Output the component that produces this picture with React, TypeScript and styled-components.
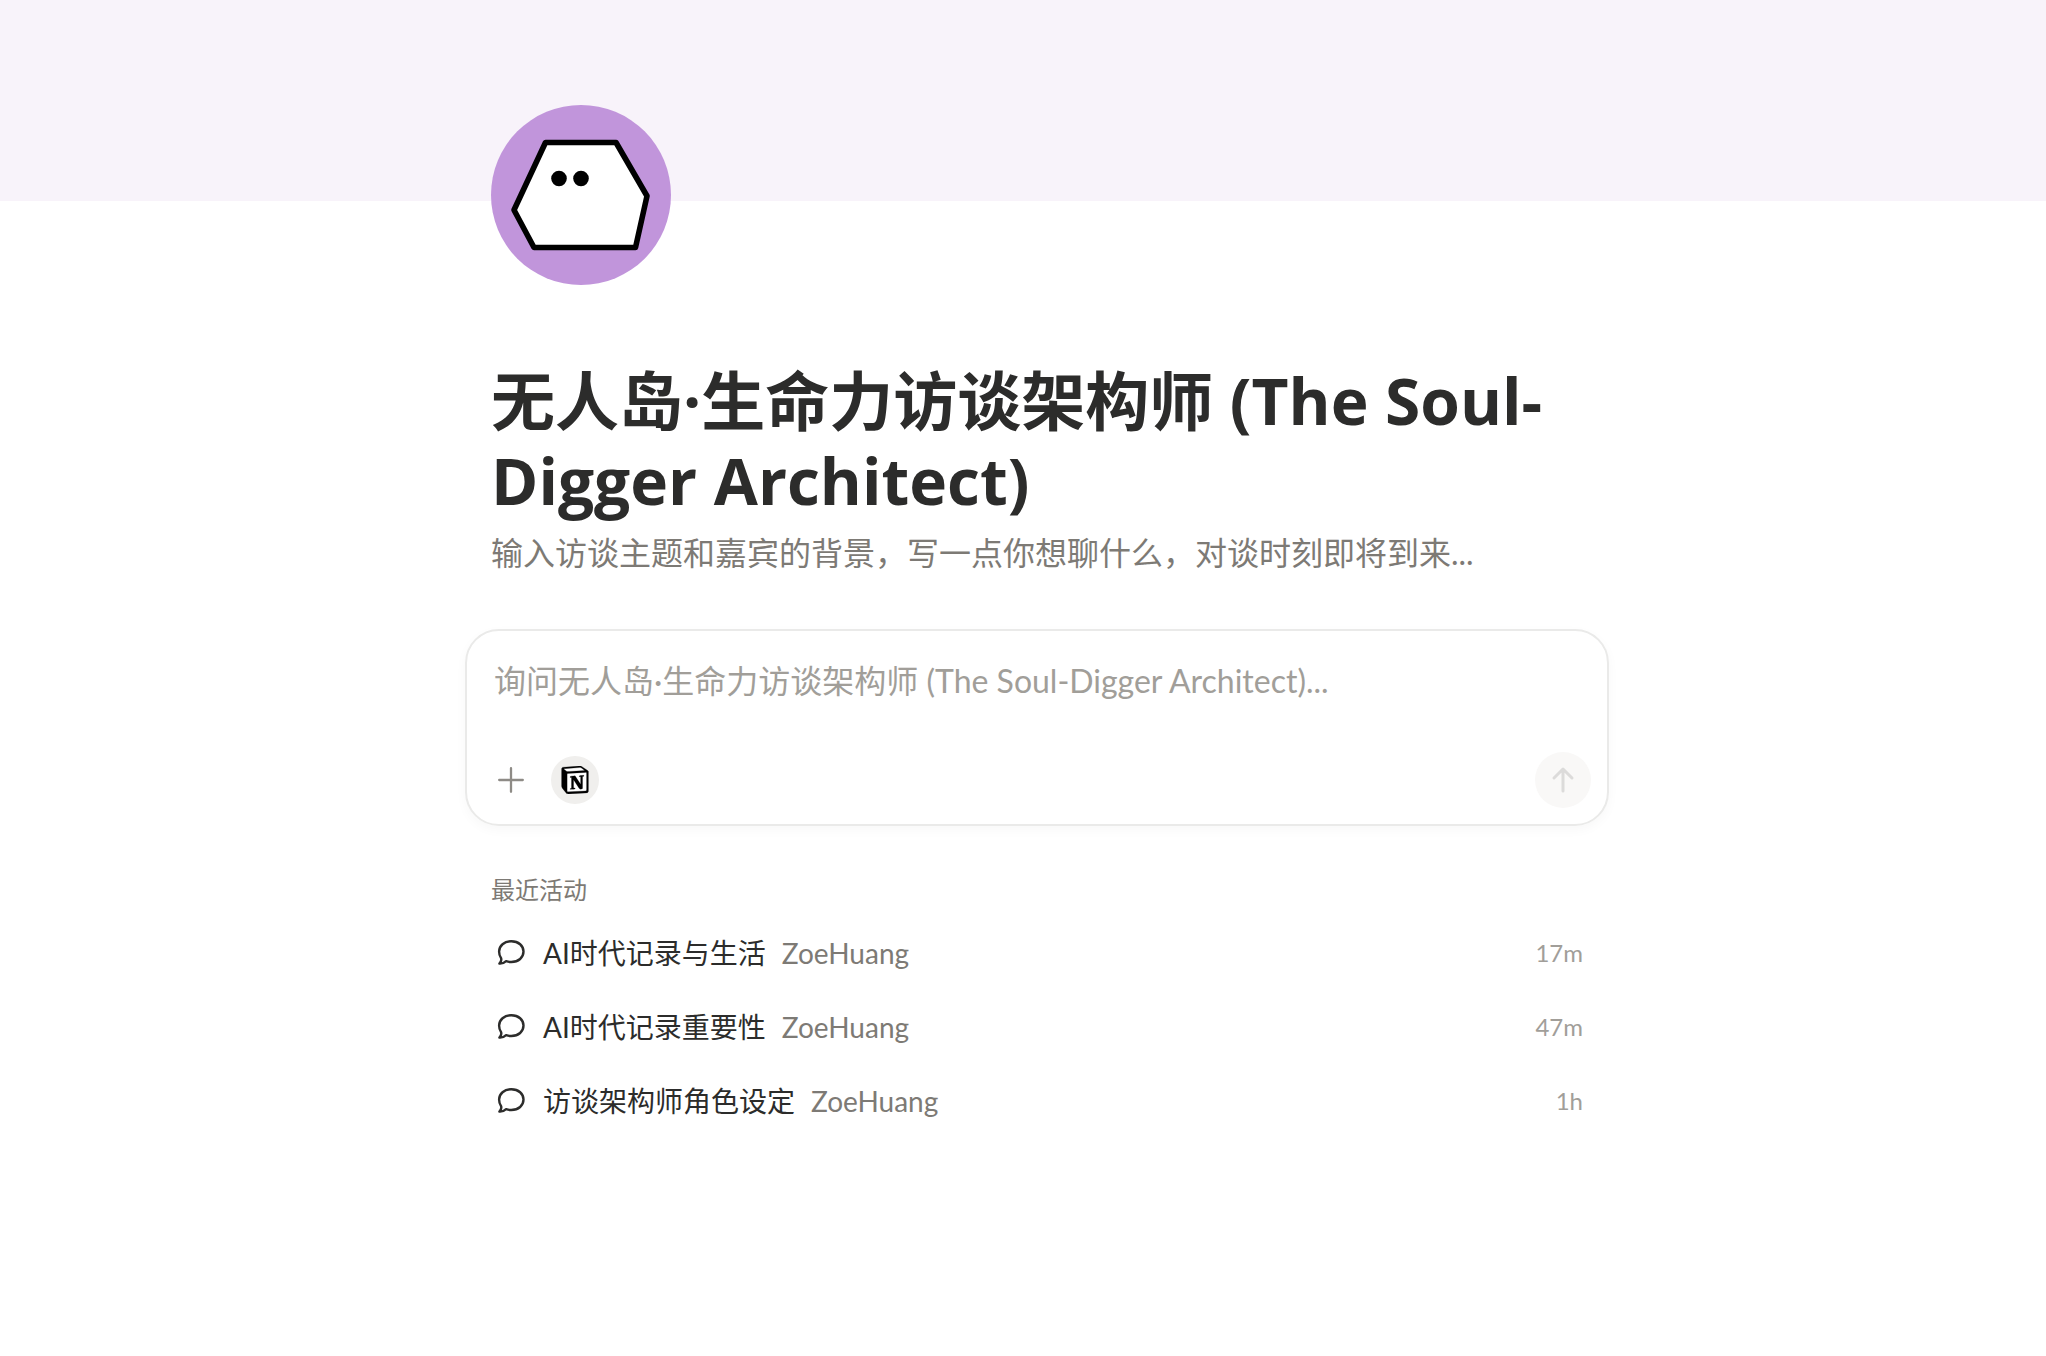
import React from "react";
import styled, { createGlobalStyle } from "styled-components";
import { SiNotion } from "react-icons/si";

const GlobalStyle = createGlobalStyle`
  *, *::before, *::after { box-sizing: border-box; }
  body {
    margin: 0;
    background: #ffffff;
    color: #2c2c2b;
    font-family: Lato, "Noto Sans CJK SC", sans-serif;
  }
  button, textarea { font: inherit; color: inherit; }
`;

const Banner = styled.div`
  height: 201px;
  background: #f8f3fa;
`;

const Page = styled.main`
  max-width: 1172px;
  margin: 0 auto;
  padding: 0 0 80px 28px;
`;

const Section = styled.section`
  padding: 0 26px;
`;

const Avatar = styled.svg`
  display: block;
  width: 180px;
  height: 180px;
  margin-top: -96px;
`;

const Title = styled.h1`
  margin: 76px 0 0;
  font-family: "Open Sans", "Noto Sans CJK SC", sans-serif;
  font-size: 64px;
  font-weight: 700;
  line-height: 80px;
`;

const Subtitle = styled.p`
  margin: 8px 0 0;
  font-size: 32px;
  line-height: 48px;
  color: #7d7a75;
`;

const Composer = styled.form`
  display: flex;
  flex-direction: column;
  margin-top: 52px;
  padding: 26px 16px 16px;
  border: 2px solid #eaeae9;
  border-radius: 34px;
  box-shadow: 0 4px 12px rgba(0, 0, 0, 0.03);
`;

const Prompt = styled.textarea`
  display: block;
  width: 100%;
  height: 48px;
  margin-bottom: 47px;
  padding: 0 11px;
  border: 0;
  outline: 0;
  resize: none;
  overflow: hidden;
  background: transparent;
  font-size: 32px;
  line-height: 48px;

  &::placeholder {
    color: #a19e99;
    opacity: 1;
  }
`;

const Toolbar = styled.div`
  display: flex;
  align-items: center;
  gap: 16px;
  padding-left: 4px;
`;

const RoundButton = styled.button<{ $size: number; $fill?: string; $end?: boolean }>`
  display: flex;
  align-items: center;
  justify-content: center;
  width: ${(p) => p.$size}px;
  height: ${(p) => p.$size}px;
  margin-left: ${(p) => (p.$end ? "auto" : "0")};
  padding: 0;
  border: 0;
  border-radius: 50%;
  background: ${(p) => p.$fill || "transparent"};
`;

const RecentTitle = styled.h2`
  margin: 44px 0 6px;
  font-size: 24px;
  font-weight: 400;
  line-height: 40px;
  color: #7d7a75;
`;

const RecentList = styled.ul`
  margin: 0;
  padding: 0;
  list-style: none;
`;

const RecentLink = styled.a`
  display: flex;
  align-items: center;
  height: 74px;
  padding-left: 4px;
  color: inherit;
  text-decoration: none;
`;

const RecentName = styled.span`
  margin: 0 16px;
  font-size: 28px;
  line-height: 40px;
`;

const RecentAuthor = styled.span`
  font-size: 28px;
  line-height: 40px;
  color: #7d7a75;
`;

const RecentTime = styled.time`
  margin-left: auto;
  font-size: 24px;
  line-height: 40px;
  color: #a19e99;
`;

const PlusIcon = () => (
  <svg width="26" height="26" viewBox="0 0 26 26" aria-hidden="true">
    <path d="M13 1.2v23.6M1.2 13h23.6" stroke="#8e8b86" strokeWidth="2.3" strokeLinecap="round" />
  </svg>
);

const NotionIcon = () => (
  <svg width="30" height="30" viewBox="0 0 30 30" aria-hidden="true">
    <path d="M2 3 19 1.600 28 7.500V27.500L8 28.600 2 21Z" fill="#fff" stroke="#fff" strokeWidth="1.600" strokeLinejoin="round" />
    <SiNotion x="1" y="1" size={28} color="#000" stroke="#000" strokeWidth={0.2} />
  </svg>
);

const ArrowUpIcon = () => (
  <svg width="28" height="28" viewBox="0 0 28 28" aria-hidden="true">
    <path
      d="M14 25V3.5M5 12l9-9 9 9"
      fill="none"
      stroke="#dcdbda"
      strokeWidth="3"
      strokeLinecap="round"
      strokeLinejoin="round"
    />
  </svg>
);

const ChatIcon = () => (
  <svg width="32" height="32" viewBox="0 0 32 32" aria-hidden="true">
    <path
      d="M16.300 4.200C23.600 4.200 28.500 8.800 28.500 14.600S23.600 25 16.300 25c-1.900 0-3.600-.3-5.200-.9-1.700 1.600-3.900 2.700-6.700 2.500 1.900-1.900 2.300-3.700 1.600-5.700C4.700 19.200 4.100 17.100 4.100 14.600 4.100 8.800 9.200 4.200 16.300 4.200Z"
      fill="none"
      stroke="#2c2c2b"
      strokeWidth="2.4"
      strokeLinejoin="round"
    />
  </svg>
);

const recent = [
  { name: "AI时代记录与生活", author: "ZoeHuang", time: "17m" },
  { name: "AI时代记录重要性", author: "ZoeHuang", time: "47m" },
  { name: "访谈架构师角色设定", author: "ZoeHuang", time: "1h" },
];

export default function App() {
  return (
    <>
      <GlobalStyle />
      <Banner />
      <Page lang="zh-CN">
        <Section>
          <Avatar viewBox="0 0 180 180" aria-hidden="true">
            <circle cx="90" cy="90" r="90" fill="#c195db" />
            <path
              d="M54.500 37.500H125L156 91 144.500 142.500H43L23 105Z"
              fill="#fff"
              stroke="#000"
              strokeWidth="5.600"
              strokeLinejoin="round"
            />
            <circle cx="68" cy="73.500" r="7.800" />
            <circle cx="90" cy="73.500" r="7.800" />
          </Avatar>
          <Title>无人岛·生命力访谈架构师 (The Soul-Digger Architect)</Title>
          <Subtitle>输入访谈主题和嘉宾的背景，写一点你想聊什么，对谈时刻即将到来...</Subtitle>
        </Section>

        <Composer onSubmit={(e) => e.preventDefault()}>
          <Prompt
            aria-label="询问"
            rows={1}
            placeholder="询问无人岛·生命力访谈架构师 (The Soul-Digger Architect)..."
          />
          <Toolbar>
            <RoundButton type="button" $size={48} aria-label="添加">
              <PlusIcon />
            </RoundButton>
            <RoundButton type="button" $size={48} $fill="#f0efed" aria-label="Notion">
              <NotionIcon />
            </RoundButton>
            <RoundButton type="submit" $size={56} $fill="#f9f8f7" $end aria-label="发送">
              <ArrowUpIcon />
            </RoundButton>
          </Toolbar>
        </Composer>

        <Section>
          <RecentTitle>最近活动</RecentTitle>
          <RecentList>
            {recent.map((item) => (
              <li key={item.name}>
                <RecentLink href="#">
                  <ChatIcon />
                  <RecentName>{item.name}</RecentName>
                  <RecentAuthor>{item.author}</RecentAuthor>
                  <RecentTime>{item.time}</RecentTime>
                </RecentLink>
              </li>
            ))}
          </RecentList>
        </Section>
      </Page>
    </>
  );
}
